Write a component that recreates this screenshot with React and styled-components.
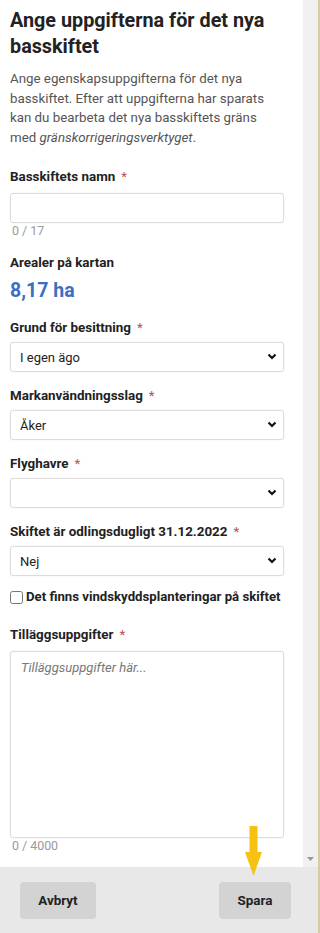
import React from 'react';
import styled, { createGlobalStyle } from 'styled-components';

const Global = createGlobalStyle`
    html, body { margin: 0; padding: 0; background: #fff; }
    body { font-family: Roboto, "Liberation Sans", Arial, sans-serif; }
    * { box-sizing: border-box; }
`;

const Frame = styled.div`
    width: 320px;
    height: 933px;
    display: flex;
    flex-direction: column;
    border-right: 2px solid #d9cba5;
    position: relative;
    overflow: hidden;
`;

const Body = styled.div`
    flex: 1;
    display: flex;
    min-height: 0;
`;

const Content = styled.div`
    width: 303px;
    padding: 8px 19px 0 10px;
`;

const Track = styled.div`
    width: 15px;
    background: #f0f0f0;
    display: flex;
    align-items: flex-end;
    justify-content: center;
    padding-bottom: 6px;
`;

const Title = styled.h1`
    margin: 0;
    font-size: 19.8px;
    line-height: 26px;
    font-weight: 700;
    color: #222;
`;

const Lead = styled.p`
    margin: 9px 0 0;
    padding-right: 8px;
    font-size: 13.3px;
    line-height: 19.5px;
    color: #555;
    em { font-style: italic; }
`;

const Field = styled.div`
    margin-top: ${p => p.$top || 16}px;
`;

const Label = styled.div`
    font-size: 13.4px;
    font-weight: 700;
    color: #222;
    line-height: 16px;
    margin-bottom: ${p => p.$gap || 6}px;
`;

const Req = styled.span`
    color: #c0504d;
    margin-left: 6px;
    font-weight: 400;
`;

const TextInput = styled.input`
    display: block;
    width: 100%;
    height: 30px;
    border: 1px solid #dcdcdc;
    border-radius: 3px;
    box-shadow: 0 0 2px rgba(0,0,0,0.08);
    outline: none;
`;

const Counter = styled.div`
    font-size: 12.4px;
    color: #9a9a9a;
    padding-left: 2px;
    line-height: 15px;
`;

const Area = styled.div`
    font-size: 19.5px;
    font-weight: 700;
    color: #3b6fc2;
    line-height: 22px;
`;

const SelectWrap = styled.div`
    position: relative;
`;

const Select = styled.select`
    appearance: none;
    display: block;
    width: 100%;
    height: 30px;
    border: 1px solid #dcdcdc;
    border-radius: 3px;
    box-shadow: 0 0 2px rgba(0,0,0,0.08);
    background: #fff;
    font-family: inherit;
    font-size: 13px;
    color: #222;
    padding: 0 9px;
    outline: none;
`;

const Chevron = styled.svg`
    position: absolute;
    right: 7px;
    top: 11px;
    pointer-events: none;
`;

const CheckRow = styled.label`
    display: flex;
    align-items: center;
    gap: 3px;
    margin-top: 13px;
    font-size: 13.2px;
    font-weight: 700;
    color: #222;
    line-height: 16px;
    white-space: nowrap;
    margin-right: -8px;
    input { margin: 0; width: 13px; height: 13px; flex: none; }
`;

const TextArea = styled.textarea`
    display: block;
    width: 100%;
    height: 187px;
    border: 1px solid #dcdcdc;
    border-radius: 3px;
    box-shadow: 0 0 2px rgba(0,0,0,0.08);
    resize: none;
    padding: 8px 10px;
    font-family: inherit;
    font-size: 13px;
    outline: none;
    &::placeholder { color: #777; font-style: italic; }
`;

const Footer = styled.div`
    height: 66px;
    background: #e8e8e8;
    display: flex;
    align-items: center;
    justify-content: space-between;
    padding: 0 27px 0 20px;
`;

const Button = styled.button`
    height: 37px;
    width: ${p => p.$w}px;
    border: none;
    border-radius: 4px;
    background: #d3d3d3;
    font-family: inherit;
    font-size: 13.4px;
    font-weight: 700;
    color: #222;
`;

const Arrow = styled.svg`
    position: absolute;
    left: 245px;
    top: 826px;
`;

function SelectField({ label, value, options, top }) {
    return (
        <Field $top={top}>
            <Label>{label}<Req>*</Req></Label>
            <SelectWrap>
                <Select defaultValue={value}>
                    {options.map(o => <option key={o} value={o}>{o}</option>)}
                </Select>
                <Chevron width="10" height="7" viewBox="0 0 10 7">
                    <path d="M1.5 1.5 L5 5 L8.5 1.5" fill="none" stroke="#111" strokeWidth="2.2" />
                </Chevron>
            </SelectWrap>
        </Field>
    );
}

export default function App() {
    return (
        <Frame>
            <Global />
            <Body>
                <Content>
                    <Title>Ange uppgifterna för det nya basskiftet</Title>
                    <Lead>
                        Ange egenskapsuppgifterna för det nya basskiftet. Efter att uppgifterna har sparats kan du bearbeta det nya basskiftets gräns med <em>gränskorrigeringsverktyget</em>.
                    </Lead>
                    <Field $top={22}>
                        <Label $gap={8}>Basskiftets namn<Req>*</Req></Label>
                        <TextInput />
                        <Counter>0 / 17</Counter>
                    </Field>
                    <Field $top={17}>
                        <Label $gap={9}>Arealer på kartan</Label>
                        <Area>8,17 ha</Area>
                    </Field>
                    <SelectField top={18} label="Grund för besittning" value="I egen ägo" options={['I egen ägo', 'Arrende']} />
                    <SelectField label="Markanvändningsslag" value="Åker" options={['Åker', 'Bete']} />
                    <SelectField label="Flyghavre" value="" options={['', 'Ja', 'Nej']} />
                    <SelectField label="Skiftet är odlingsdugligt 31.12.2022" value="Nej" options={['Ja', 'Nej']} />
                    <CheckRow>
                        <input type="checkbox" />
                        Det finns vindskyddsplanteringar på skiftet
                    </CheckRow>
                    <Field $top={22}>
                        <Label $gap={8}>Tilläggsuppgifter<Req>*</Req></Label>
                        <TextArea placeholder="Tilläggsuppgifter här..." />
                        <Counter>0 / 4000</Counter>
                    </Field>
                </Content>
                <Track>
                    <svg width="7" height="4" viewBox="0 0 7 4"><path d="M0 0 H7 L3.5 4 Z" fill="#999" /></svg>
                </Track>
            </Body>
            <Footer>
                <Button $w={76}>Avbryt</Button>
                <Button $w={72}>Spara</Button>
            </Footer>
            <Arrow width="17" height="50" viewBox="0 0 17 50">
                <rect x="4.5" y="0" width="8" height="28" fill="#f5c211" />
                <path d="M0 26 H17 L8.5 50 Z" fill="#f5c211" />
            </Arrow>
        </Frame>
    );
}
